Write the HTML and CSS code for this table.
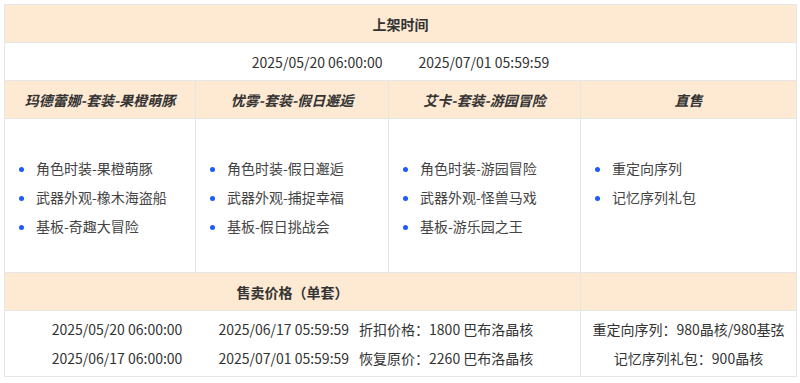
FILE: index.html
```html
<!DOCTYPE html>
<html lang="zh-CN">
<head>
    <meta charset="UTF-8">
    <meta name="viewport" content="width=device-width, initial-scale=1.0">
    <title>上架时间</title>
    <link rel="stylesheet" href="styles.css">
</head>
<body>
    <table class="sale-table">
        <colgroup>
            <col class="col-a">
            <col class="col-b">
            <col class="col-c">
            <col class="col-d">
        </colgroup>
        <tr class="head-row">
            <th colspan="4">上架时间</th>
        </tr>
        <tr class="date-row">
            <td colspan="4">
                <span>2025/05/20 06:00:00</span><span class="gap-wide">2025/07/01 05:59:59</span>
            </td>
        </tr>
        <tr class="name-row">
            <th>玛德蕾娜-套装-果橙萌豚</th>
            <th>忧雾-套装-假日邂逅</th>
            <th>艾卡-套装-游园冒险</th>
            <th>直售</th>
        </tr>
        <tr class="item-row">
            <td>
                <ul class="items">
                    <li>角色时装-果橙萌豚</li>
                    <li>武器外观-橡木海盗船</li>
                    <li>基板-奇趣大冒险</li>
                </ul>
            </td>
            <td>
                <ul class="items">
                    <li>角色时装-假日邂逅</li>
                    <li>武器外观-捕捉幸福</li>
                    <li>基板-假日挑战会</li>
                </ul>
            </td>
            <td>
                <ul class="items">
                    <li>角色时装-游园冒险</li>
                    <li>武器外观-怪兽马戏</li>
                    <li>基板-游乐园之王</li>
                </ul>
            </td>
            <td>
                <ul class="items">
                    <li>重定向序列</li>
                    <li>记忆序列礼包</li>
                </ul>
            </td>
        </tr>
        <tr class="head-row">
            <th colspan="3">售卖价格（单套）</th>
            <th></th>
        </tr>
        <tr class="price-row">
            <td colspan="3">
                <div><span>2025/05/20 06:00:00</span><span class="gap-wide">2025/06/17 05:59:59</span><span class="gap-narrow">折扣价格：1800 巴布洛晶核</span></div>
                <div><span>2025/06/17 06:00:00</span><span class="gap-wide">2025/07/01 05:59:59</span><span class="gap-narrow">恢复原价：2260 巴布洛晶核</span></div>
            </td>
            <td>
                <div>重定向序列：980晶核/980基弦</div>
                <div>记忆序列礼包：900晶核</div>
            </td>
        </tr>
    </table>
</body>
</html>
```

FILE: styles.css
```css
body {
    margin: 0;
    padding: 4px;
    background-color: #ffffff;
    font-family: "Noto Sans CJK SC", "Open Sans", sans-serif;
    font-size: 14px;
    color: #333333;
}

.sale-table {
    width: 792px;
    border-collapse: collapse;
    table-layout: fixed;
    border: 1px solid #e6e6e6;
}

.col-a { width: 191px; }
.col-b { width: 193px; }
.col-c { width: 192px; }
.col-d { width: 216px; }

.sale-table th,
.sale-table td {
    border: 1px solid #e6e6e6;
    padding: 0;
    text-align: center;
    vertical-align: middle;
}

.sale-table th {
    background-color: #fee9d3;
    font-weight: bold;
    color: #333333;
}

.head-row th {
    height: 37px;
}

.date-row td {
    height: 37px;
    color: #333333;
}

.name-row th {
    height: 37px;
    font-style: italic;
}

.item-row td {
    height: 153px;
    vertical-align: top;
    text-align: left;
}

.items {
    margin: 0;
    padding: 35px 0 0 31px;
    color: #444444;
    line-height: 29px;
}

.items li::marker {
    color: #1a5cff;
}

.price-row td {
    height: 65px;
    line-height: 29px;
    color: #333333;
}

.gap-wide {
    margin-left: 36px;
}

.gap-narrow {
    margin-left: 10px;
}
```
